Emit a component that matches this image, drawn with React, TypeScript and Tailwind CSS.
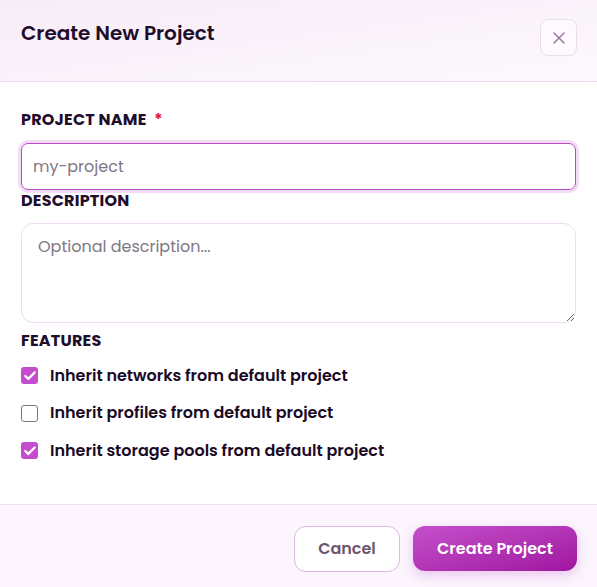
import { X, Check } from "lucide-react";

const features = [
  { id: "networks", label: "Inherit networks from default project", checked: true },
  { id: "profiles", label: "Inherit profiles from default project", checked: false },
  { id: "storage", label: "Inherit storage pools from default project", checked: true },
];

const font = { fontFamily: "Poppins, Inter, 'Noto Sans', sans-serif" };

export default function App() {
  return (
    <div className="w-[597px] h-[587px] bg-white flex flex-col text-[#1f0d2b]" style={font}>
      <div className="h-[82px] shrink-0 flex items-start justify-between px-[20px] pt-[19px] border-b border-[#eadcec] bg-gradient-to-br from-[#f7ecf8] to-[#fdf9fd]">
        <h2 className="ml-px text-[20px] leading-[28px] font-semibold">Create New Project</h2>
        <button className="w-[37px] h-[37px] flex items-center justify-center rounded-lg border border-[#ecdcef] bg-[#fdf9fe] text-[#9a76a3]">
          <X size={20} strokeWidth={1.75} />
        </button>
      </div>

      <div className="flex-1 px-[21px] pt-[28px]">
        <label className="block text-[16px] leading-[20px] font-bold uppercase tracking-[0.2px] mb-[13px]">
          Project Name <span className="text-[#e01e3c] ml-1">*</span>
        </label>
        <div className="rounded-[7px] ring-[3px] ring-[#f3dcf5]">
          <input
            className="w-full h-[47px] rounded-[7px] border border-[#b94ac4] px-[11px] text-[16px] outline-none placeholder:text-[#7f7785]"
            placeholder="my-project"
          />
        </div>
        <label className="block mt-[1px] text-[16px] leading-[20px] font-bold uppercase tracking-[0.2px] mb-[12px]">
          Description
        </label>
        <textarea
          className="block w-full h-[100px] rounded-[12px] border border-[#f0dcf2] px-[16px] py-[11px] text-[16px] outline-none placeholder:text-[#7f7785]"
          placeholder="Optional description..."
        />
        <div className="mt-[8px] text-[16px] leading-[20px] font-bold uppercase tracking-[0.2px]">Features</div>
        <div className="mt-[12px] flex flex-col gap-[12.5px]">
          {features.map((f) => (
            <label key={f.id} className="flex items-center gap-[12px] h-[25px]">
              {f.checked ? (
                <span className="w-[17px] h-[17px] rounded-[3px] bg-[#c34ccf] flex items-center justify-center text-white">
                  <Check size={14} strokeWidth={4} />
                </span>
              ) : (
                <span className="w-[17px] h-[17px] rounded-[3px] border-[1.5px] border-[#7a7a7a] bg-white" />
              )}
              <span className="text-[16px] font-semibold text-[#1a0a26]">{f.label}</span>
            </label>
          ))}
        </div>
      </div>

      <div className="h-[83px] shrink-0 border-t border-[#eedcf0] bg-[#fcf5fd] flex items-center justify-end gap-[13px] px-[20px] pt-[5px]">
        <button className="h-[46px] w-[106px] rounded-[12px] border border-[#dab8e0] bg-white text-[16px] font-semibold text-[#6b5570]">
          Cancel
        </button>
        <button className="h-[45px] w-[164px] rounded-[12px] bg-gradient-to-br from-[#c54fcc] to-[#9f12a0] text-[16px] font-semibold text-white shadow-[0_4px_12px_rgba(180,60,190,0.25)]">
          Create Project
        </button>
      </div>
    </div>
  );
}
